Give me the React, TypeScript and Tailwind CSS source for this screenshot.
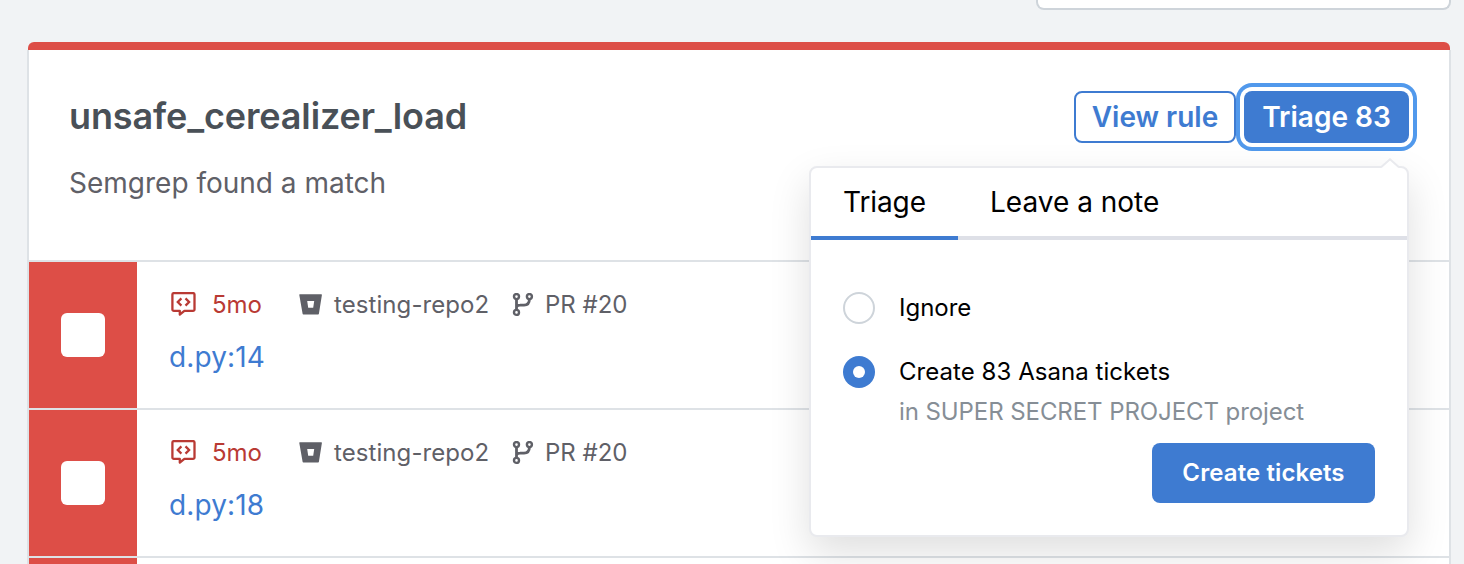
function FindingIcon() {
  return (
    <svg width="27" height="26" viewBox="0 0 27 26" fill="none" stroke="#b93a34" className="shrink-0">
      <path d="M4.2 1.1H23A1.5 1.5 0 0 1 24.5 2.6v14.8a1.5 1.5 0 0 1-1.5 1.5h-8.6L9.8 22.5v-3.6H3.9a1.5 1.5 0 0 1-1.5-1.5V2.6A1.5 1.5 0 0 1 3.9 1.1Z" strokeWidth="2.3" strokeLinejoin="round" />
      <path d="m11.4 6.4-3.6 3.6 3.6 3.6M15.5 6.4l3.6 3.6-3.6 3.6" strokeWidth="2.3" />
    </svg>
  );
}

function BucketIcon() {
  return (
    <svg width="24" height="22" viewBox="0 0 24 22" className="shrink-0">
      <path fillRule="evenodd" fill="#5f6067" d="M.8.2h21.5a.6.6 0 0 1 .6.7l-3 18.8a.8.8 0 0 1-.8.7H4.4a.8.8 0 0 1-.8-.7L.3.9A.6.6 0 0 1 .8.2ZM8.2 7l1 6.8h5l1-6.8Z" />
    </svg>
  );
}

function BranchIcon() {
  return (
    <svg width="22" height="24" viewBox="0 0 22 24" fill="none" stroke="#5f6067" className="shrink-0">
      <g strokeWidth="2.4">
        <circle cx="4.5" cy="3.6" r="2.5" />
        <circle cx="17.4" cy="3.6" r="2.5" />
        <circle cx="4.5" cy="19.4" r="2.5" />
      </g>
      <path d="M4.5 6.2v10.6M17.4 6.2c0 3.6-2 5.8-5.4 5.9l-4 .1c-1.8 0-3 .5-3.5 1.6" strokeWidth="2.8" />
    </svg>
  );
}

function FindingRow({ file }: { file: string }) {
  return (
    <div className="flex h-[148px] shrink-0 border-b-2 border-[#dee2e6]">
      <div className="flex w-[108px] items-center justify-center bg-[#dd4e47]">
        <div className="size-11 rounded-[6px] bg-white" />
      </div>
      <div className="flex flex-col pt-[27px] pl-8">
        <div className="flex h-8 items-center text-2xl leading-8 text-[#5f6067]">
          <span className="ml-px flex"><FindingIcon /></span>
          <span className="ml-[15px] w-[50px] whitespace-nowrap text-[#b93a34]">5mo</span>
          <span className="ml-[37px] flex"><BucketIcon /></span>
          <span className="ml-[11px] w-[155px] whitespace-nowrap tracking-[0.08px]">testing-repo2</span>
          <span className="ml-[23px] flex"><BranchIcon /></span>
          <span className="ml-[11px] whitespace-nowrap">PR #20</span>
        </div>
        <a className="mt-[18px] text-[28px] leading-9 tracking-[0.12px] text-[#3e7bd1]">{file}</a>
      </div>
    </div>
  );
}

function TriagePopover() {
  return (
    <div className="absolute top-[75px] right-0 z-10 h-[371px] w-[600px] rounded-lg border-2 border-[#e9eaee] bg-white text-black shadow-[0_16px_40px_rgba(0,0,0,0.13)]">
      <svg width="20" height="12" viewBox="0 0 20 12" className="absolute -top-[10px] right-[7px]">
        <path d="M1 10 10 1.5 19 10v2H1Z" fill="#fff" />
        <path d="M1 9.3 10 1.3l9 8" fill="none" stroke="#e9eaee" strokeWidth="2" />
      </svg>
      <div className="flex h-[72px] text-[28px] leading-[69px]">
        <div className="w-[147px] border-b-4 border-[#3e7bd1] pl-8 tracking-[-0.1px]">Triage</div>
        <div className="flex-1 border-b-4 border-[#dee0e7] pl-8">Leave a note</div>
      </div>
      <div className="flex flex-col px-8 pt-[52px] text-2xl leading-8">
        <div className="flex items-center gap-6">
          <span className="size-8 rounded-full border-2 border-[#ced4da]" />
          <span>Ignore</span>
        </div>
        <div className="mt-8 flex items-center gap-6">
          <span className="flex size-8 items-center justify-center rounded-full bg-[#3e7bd1]">
            <span className="size-3 rounded-full bg-white" />
          </span>
          <span className="tracking-[0.05px]">Create 83 Asana tickets</span>
        </div>
        <div className="mt-2 pl-14 tracking-[-0.08px] text-[#868e96]">in SUPER SECRET PROJECT project</div>
        <button className="mt-[15px] h-[60px] w-[223px] self-end rounded-lg bg-[#3e7bd1] font-semibold tracking-[0.1px] text-white">
          Create tickets
        </button>
      </div>
    </div>
  );
}

export default function App() {
  return (
    <div className="flex h-[564px] w-[1464px] flex-col overflow-hidden bg-[#f1f3f5] font-[Inter,sans-serif]">
      <div className="mr-[13px] h-[10px] w-[415px] shrink-0 self-end rounded-b-lg border-2 border-t-0 border-[#ced4da] bg-white" />
      <div className="mt-8 mr-[13px] ml-[27px] flex flex-col">
        <div className="mx-px h-2 shrink-0 rounded-t-[6px] bg-[#dd4e47]" />
        <div className="flex h-[560px] flex-col border-x-2 border-[#dee2e6] bg-white">
          <div className="flex h-[212px] shrink-0 items-start justify-between border-b-2 border-[#dee2e6] pt-[41px] pr-10 pl-10">
            <div>
              <h1 className="text-4xl leading-[50px] font-semibold tracking-[-0.13px] text-[#495057]">unsafe_cerealizer_load</h1>
              <p className="mt-[22px] text-[28px] leading-10 text-[#5f6067]">Semgrep found a match</p>
            </div>
            <div className="relative flex gap-2 text-[28px] font-semibold">
              <button className="h-[52px] w-[162px] rounded-lg border-2 border-[#3e7bd1] whitespace-nowrap text-[#3e7bd1]">View rule</button>
              <button className="h-[52px] w-[165px] rounded-lg bg-[#3e7bd1] whitespace-nowrap text-white shadow-[0_0_0_4px_#fff,0_0_0_8px_#5199ec]">Triage 83</button>
              <div className="contents font-normal">
                <TriagePopover />
              </div>
            </div>
          </div>
          <FindingRow file="d.py:14" />
          <FindingRow file="d.py:18" />
          <div className="w-[108px] flex-1 bg-[#dd4e47]" />
        </div>
      </div>
    </div>
  );
}
